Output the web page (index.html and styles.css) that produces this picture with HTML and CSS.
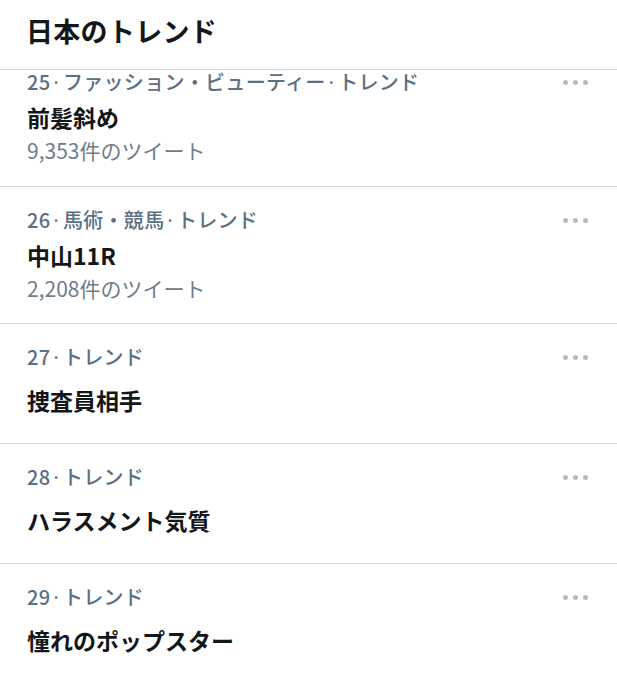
FILE: index.html
```html
<!DOCTYPE html>
<html lang="ja">
<head>
<meta charset="utf-8">
<title>日本のトレンド</title>
<link rel="stylesheet" href="styles.css">
</head>
<body>
<div class="page">
  <header class="header">
    <h1 class="header__title">日本のトレンド</h1>
  </header>
  <ul class="trends">
    <li class="trend trend--clipped">
      <div class="trend__top">
        <span class="trend__meta">25<span class="sep">·</span>ファッション・ビューティー<span class="sep">·</span>トレンド</span>
        <span class="dots"><i></i><i></i><i></i></span>
      </div>
      <div class="trend__name">前髪斜め</div>
      <div class="trend__count">9,353件のツイート</div>
    </li>
    <li class="trend">
      <div class="trend__top">
        <span class="trend__meta">26<span class="sep">·</span>馬術・競馬<span class="sep">·</span>トレンド</span>
        <span class="dots"><i></i><i></i><i></i></span>
      </div>
      <div class="trend__name">中山11R</div>
      <div class="trend__count">2,208件のツイート</div>
    </li>
    <li class="trend trend--nocount">
      <div class="trend__top">
        <span class="trend__meta">27<span class="sep">·</span>トレンド</span>
        <span class="dots"><i></i><i></i><i></i></span>
      </div>
      <div class="trend__name">捜査員相手</div>
    </li>
    <li class="trend trend--nocount">
      <div class="trend__top">
        <span class="trend__meta">28<span class="sep">·</span>トレンド</span>
        <span class="dots"><i></i><i></i><i></i></span>
      </div>
      <div class="trend__name">ハラスメント気質</div>
    </li>
    <li class="trend trend--nocount">
      <div class="trend__top">
        <span class="trend__meta">29<span class="sep">·</span>トレンド</span>
        <span class="dots"><i></i><i></i><i></i></span>
      </div>
      <div class="trend__name">憧れのポップスター</div>
    </li>
  </ul>
</div>
</body>
</html>
```
FILE: styles.css
```css
* { box-sizing: border-box; }
html, body { margin: 0; padding: 0; background: #ffffff; }
body {
  font-family: "Noto Sans CJK JP", "Noto Sans", "Liberation Sans", sans-serif;
  color: #14171a;
  width: 617px;
  height: 680px;
  overflow: hidden;
}
.header {
  height: 70px;
  border-bottom: 1px solid #d3d7db;
  padding: 11px 0 0 26px;
}
.header__title {
  margin: 0;
  font-size: 27px;
  line-height: 40px;
  font-weight: 700;
  color: #14171a;
  letter-spacing: 0.3px;
}
.trends { list-style: none; margin: 0; padding: 0; }
.trend {
  padding: 20px 29px 22px 27px;
  border-bottom: 1px solid #d3d7db;
}
.trend--clipped { padding-top: 0; padding-bottom: 23px; }
.trend--clipped .trend__top { height: 24px; }
.trend--clipped .trend__name { margin-top: 8px; }
.trend--nocount { padding-bottom: 28px; }
.trend--nocount .trend__name { margin-top: 15px; }
.trend__top {
  display: flex;
  align-items: center;
  justify-content: space-between;
  height: 26px;
}
.trend__meta {
  font-size: 20px;
  line-height: 26px;
  font-weight: 500;
  color: #5b7083;
  letter-spacing: 0.3px;
  white-space: nowrap;
}
.sep { margin: 0 1px 0 0; font-weight: 400; }
.trend__name {
  margin-top: 7px;
  font-size: 23px;
  line-height: 30px;
  font-weight: 700;
  color: #14171a;
}
.trend__count {
  margin-top: 5px;
  font-size: 21px;
  line-height: 26px;
  font-weight: 400;
  color: #6e7c8c;
}
.dots { display: flex; gap: 5px; }
.dots i {
  display: block;
  width: 5px;
  height: 5px;
  border-radius: 50%;
  background: #b3bcc4;
}
```
